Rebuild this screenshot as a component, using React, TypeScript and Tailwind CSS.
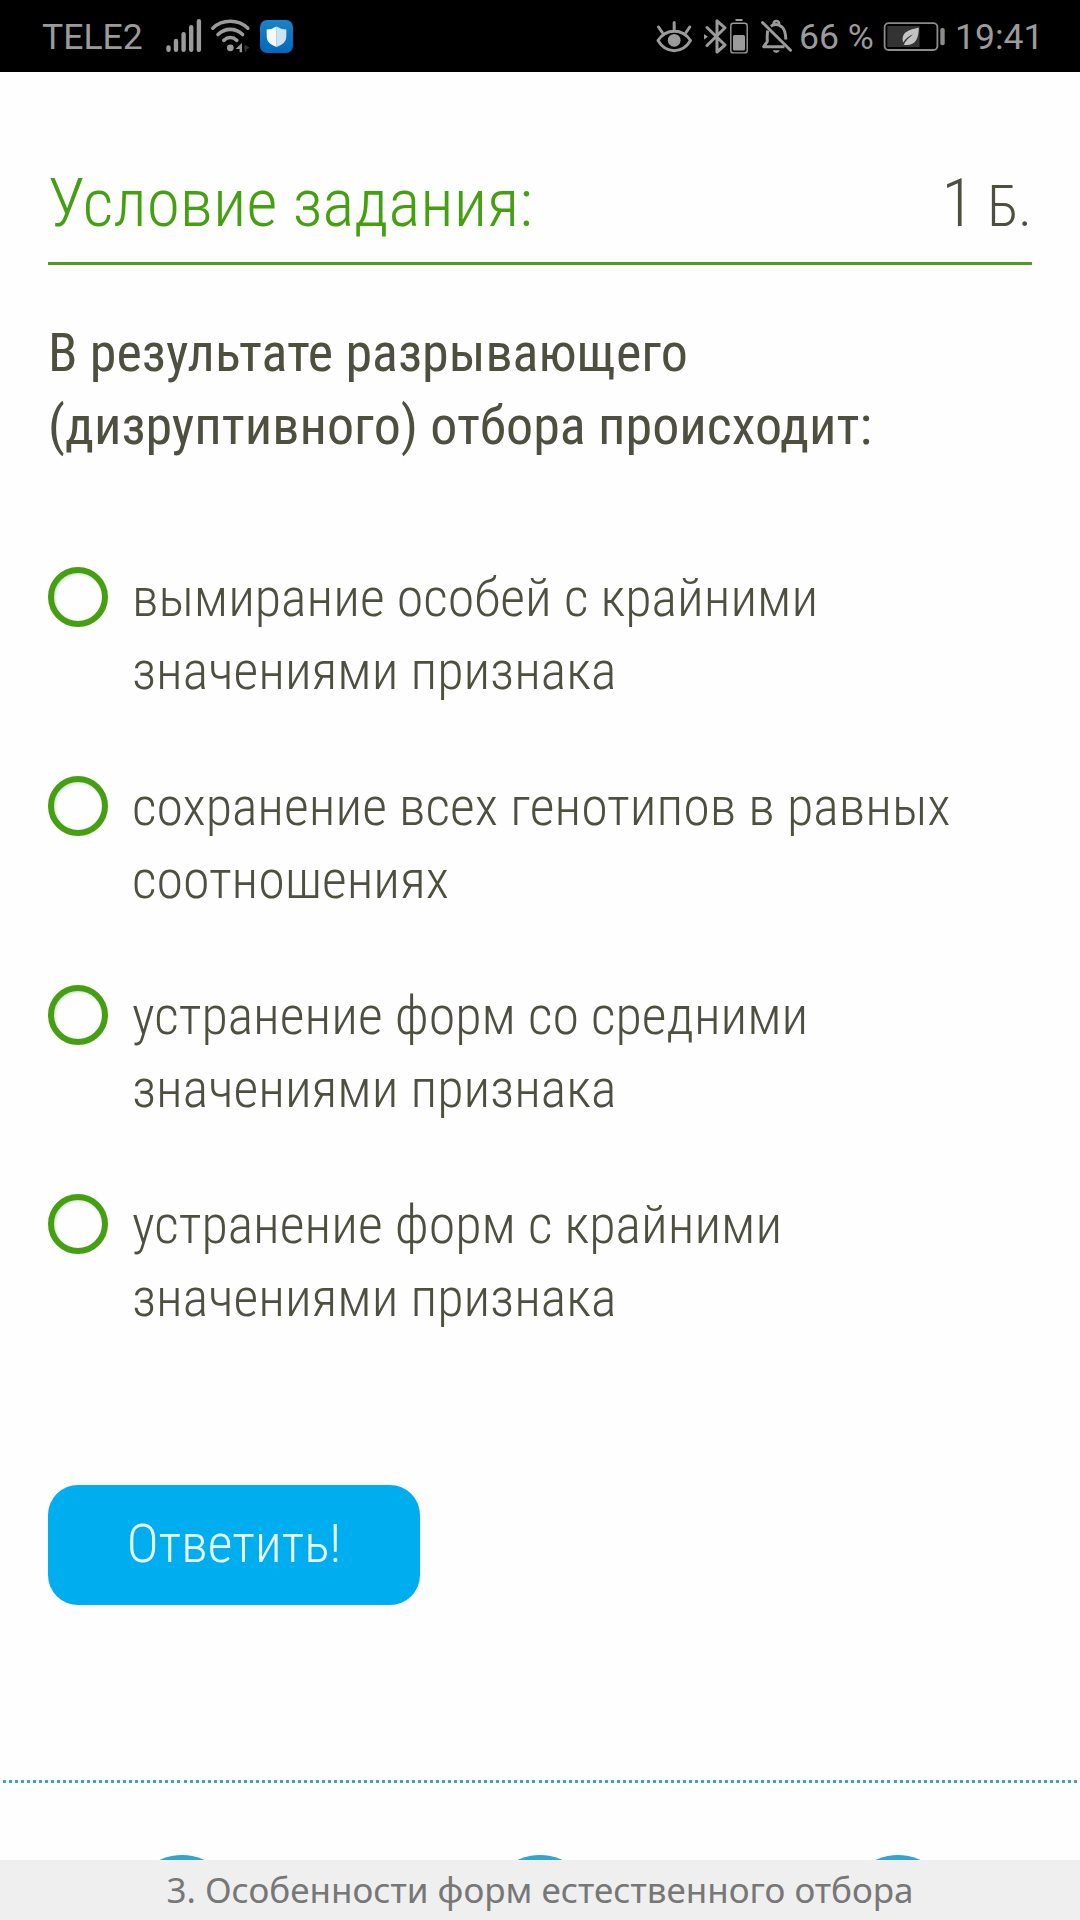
const answers = [
  ["вымирание особей с крайними", "значениями признака"],
  ["сохранение всех генотипов в равных", "соотношениях"],
  ["устранение форм со средними", "значениями признака"],
  ["устранение форм с крайними", "значениями признака"],
];

function SignalIcon() {
  return (
    <svg width="36" height="36" viewBox="166 18 36 36" fill="none" stroke="#9b9b9b" strokeWidth="4.4" strokeLinecap="round">
      <path d="M168.500 47.500v2.300M176 41v8.800M183.600 34.200v15.600M191.200 27.300v22.500M198.900 21.200v28.600" />
    </svg>
  );
}

function WifiIcon() {
  return (
    <svg width="42" height="36" viewBox="210 18 42 36" fill="none" stroke="#9b9b9b" strokeWidth="3.6" strokeLinecap="round">
      <path d="M212.800 28.200C222.500 19 238 19 247.800 28.200" />
      <path d="M218 34.500C225 27.600 235.600 27.600 242.600 34.500" />
      <path d="M223.800 40.300C227.800 36.700 232.800 36.700 236.800 40.300" />
      <circle cx="230.300" cy="47.800" r="3.400" fill="#9b9b9b" stroke="none" />
      <path d="M242 43v9.200h-2.400v-3.200h-4z" fill="#9b9b9b" stroke="none" />
      <path d="M244.500 44.500l5 3.300-3 1.700v2h-2z" fill="#343434" stroke="none" />
    </svg>
  );
}

function ShieldIcon() {
  return (
    <svg width="34" height="36" viewBox="260 18 34 36">
      <defs>
        <linearGradient id="shield-bg" x1="0" y1="0" x2="0" y2="1">
          <stop offset="0" stopColor="#1a83c9" />
          <stop offset="1" stopColor="#0467bd" />
        </linearGradient>
      </defs>
      <rect x="260" y="20" width="33" height="33" rx="7" fill="url(#shield-bg)" />
      <path d="M276.500 26.500q4.500 3 9.800 3v7.500q0 6.500-9.800 10z" fill="#cfe4f2" />
      <path d="M276.500 26.500q-4.500 3-9.800 3v7.500q0 6.500 9.800 10z" fill="#f4fafd" />
    </svg>
  );
}

function EyeIcon() {
  return (
    <svg width="38" height="36" viewBox="656 18 38 36" fill="none" stroke="#9b9b9b" strokeWidth="3" strokeLinecap="round" strokeLinejoin="round">
      <path d="M658 40.500C666 28.200 682.500 28.200 690.500 40.500C682.500 54 666 54 658 40.500Z" />
      <path d="M674.200 22.500v7M658.500 27l3.800 5.500M689.800 27l-3.800 5.500" />
      <circle cx="674.200" cy="40.300" r="6.400" fill="#9b9b9b" stroke="none" />
    </svg>
  );
}

function BluetoothIcon() {
  return (
    <svg width="46" height="36" viewBox="703 18 46 36" fill="none" stroke="#9b9b9b">
      <path d="M707 27.500l18 17.500-8 7V20.800l8 7L707 45.500" strokeWidth="3" strokeLinejoin="round" strokeLinecap="round" />
      <path d="M704 34l4 2.800-4 2.800z" fill="#9b9b9b" stroke="none" />
      <rect x="730.800" y="23.300" width="16.400" height="29.600" rx="2.500" strokeWidth="1.400" />
      <path d="M735.500 20h7" strokeWidth="2" />
      <rect x="733" y="35" width="12" height="15.500" rx="1.500" fill="#9b9b9b" stroke="none" />
    </svg>
  );
}

function BellOffIcon() {
  return (
    <svg width="32" height="36" viewBox="761 18 32 36" fill="none" stroke="#9b9b9b" strokeWidth="3" strokeLinejoin="round">
      <path d="M767.800 30.500C766.800 33 767.300 38 767.300 41.500L763.700 46.700H784.500" />
      <path d="M770.800 26.300Q776.500 22.500 782 27Q785.800 30.500 785.800 39.500" />
      <path d="M773.500 24.500Q773.500 21 776.300 21Q779.200 21 779.200 24.500" strokeWidth="2.600" />
      <path d="M762.500 22.500L790.500 50.200" strokeLinecap="round" />
      <path d="M772.800 50.200h7q-.8 2.700-3.500 2.700t-3.500-2.700z" fill="#9b9b9b" stroke="none" />
    </svg>
  );
}

function BatteryIcon() {
  return (
    <svg width="64" height="36" viewBox="882 18 64 36" fill="none">
      <rect x="884.600" y="23.200" width="52.800" height="26.800" rx="4" stroke="#8c8c8c" strokeWidth="1.800" />
      <rect x="887.300" y="26" width="32.300" height="21" fill="#333" />
      <rect x="940.300" y="28" width="4.400" height="17.300" rx="1.800" fill="#8c8c8c" />
      <path d="M918.800 27.800C909 29.500 900.500 32.500 903.200 42.500C906 38 909.500 36 913 34.300C909.500 37.500 905.500 40.500 903.700 44.800C914.500 46.500 918.800 40 918.800 27.800Z" fill="#c2c2c2" />
    </svg>
  );
}

function StatusBar() {
  return (
    <header className="flex h-[72px] shrink-0 items-center bg-black pl-[42px] font-['Roboto'] text-[35.6px] text-[#9b9b9b] font-stretch-100%">
      <span className="w-[124px] pt-[3px]">TELE2</span>
      <SignalIcon />
      <div className="ml-2 flex gap-2">
        <WifiIcon />
        <ShieldIcon />
      </div>
      <div className="ml-[362px] flex">
        <EyeIcon />
        <div className="ml-[9px] flex gap-3">
          <BluetoothIcon />
          <BellOffIcon />
        </div>
      </div>
      <span className="ml-[6px] w-[83px] pt-[3px] whitespace-nowrap">66 %</span>
      <BatteryIcon />
      <span className="ml-[9px] pt-[3px]">19:41</span>
    </header>
  );
}

export default function App() {
  return (
    <div className="flex h-[1920px] w-[1080px] flex-col overflow-hidden bg-[#fefefe] font-['Roboto_Condensed','Roboto',sans-serif] text-[#4e4f3f]">
      <StatusBar />
      <main className="flex flex-col px-12">
        <div className="mt-[90px] flex h-[103px] items-baseline justify-between border-b-[3px] border-[#509922] text-[67.5px] leading-[81px] font-light">
          <h1 className="text-[#44a010]">Условие задания:</h1>
          <div className="whitespace-pre">
            1<span className="text-[57px]"> Б.</span>
          </div>
        </div>
        <p className="mt-[52px] text-[54px] leading-[72.5px] font-normal">
          В результате разрывающего
          <br />
          (дизруптивного) отбора происходит:
        </p>
        <ul className="mt-[105px] flex flex-col gap-[69px] text-[54px] leading-[73px] font-light">
          {answers.map(([first, second]) => (
            <li key={first} className="flex gap-6">
              <span className="size-[60px] rounded-full border-6 border-[#44a010] shadow-[inset_1px_1px_3px_#cfd4cf]" />
              <span className="-mt-[6px] whitespace-nowrap">
                {first}
                <br />
                {second}
              </span>
            </li>
          ))}
        </ul>
        <button className="mt-[151px] h-[120px] w-[372px] rounded-[30px] bg-[#00adef] pb-1 text-[54px] font-light text-[#ecfbff]">
          Ответить!
        </button>
      </main>
      <div className="mx-[3px] mt-[175px] h-[3px] shrink-0 bg-[repeating-linear-gradient(90deg,#4a9fb5_0_3px,#e3fbff_3px_6.017px)]" />
      <div className="mt-[72px] flex h-[5px] shrink-0 justify-center gap-[252px] overflow-hidden">
        <span className="size-[106px] shrink-0 rounded-full bg-[#35a4cc]" />
        <span className="size-[106px] shrink-0 rounded-full bg-[#35a4cc]" />
        <span className="size-[106px] shrink-0 rounded-full bg-[#35a4cc]" />
      </div>
      <footer className="flex h-[60px] shrink-0 items-center justify-center bg-[#efefef] font-['Noto_Sans',sans-serif] text-[35px] text-[#777]">
        3. Особенности форм естественного отбора
      </footer>
    </div>
  );
}
